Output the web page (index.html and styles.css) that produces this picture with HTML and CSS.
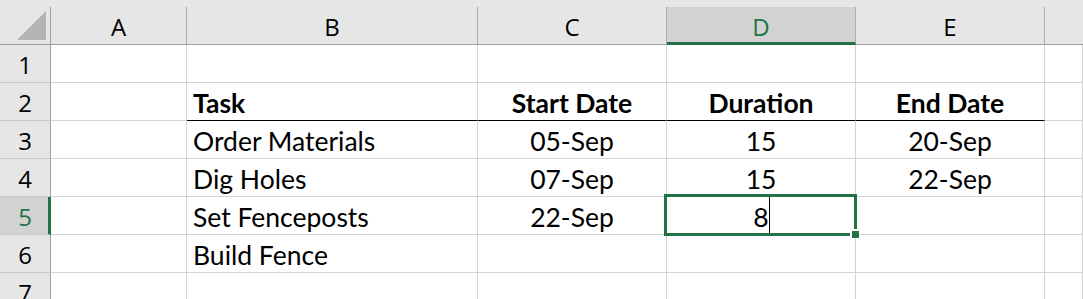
FILE: index.html
```html
<!DOCTYPE html>
<html lang="en">
<head>
    <meta charset="UTF-8">
    <title>Fence schedule</title>
    <link rel="stylesheet" href="styles.css">
</head>
<body>
    <div class="band"></div>
    <div class="sheet">
        <!-- column headers -->
        <div class="corner"><span class="tri"></span></div>
        <div class="col-head">A</div>
        <div class="col-head">B</div>
        <div class="col-head">C</div>
        <div class="col-head sel">D</div>
        <div class="col-head">E</div>
        <div class="col-head last"></div>

        <!-- row 1 -->
        <div class="row-head">1</div>
        <div class="cell"></div><div class="cell"></div><div class="cell"></div>
        <div class="cell"></div><div class="cell"></div><div class="cell"></div>

        <!-- row 2 -->
        <div class="row-head">2</div>
        <div class="cell"></div>
        <div class="cell bold under">Task</div>
        <div class="cell bold under center">Start Date</div>
        <div class="cell bold under center">Duration</div>
        <div class="cell bold under center">End Date</div>
        <div class="cell"></div>

        <!-- row 3 -->
        <div class="row-head">3</div>
        <div class="cell"></div>
        <div class="cell">Order Materials</div>
        <div class="cell center">05-Sep</div>
        <div class="cell center">15</div>
        <div class="cell center">20-Sep</div>
        <div class="cell"></div>

        <!-- row 4 -->
        <div class="row-head">4</div>
        <div class="cell"></div>
        <div class="cell">Dig Holes</div>
        <div class="cell center">07-Sep</div>
        <div class="cell center">15</div>
        <div class="cell center">22-Sep</div>
        <div class="cell"></div>

        <!-- row 5 -->
        <div class="row-head sel">5</div>
        <div class="cell"></div>
        <div class="cell">Set Fenceposts</div>
        <div class="cell center">22-Sep</div>
        <div class="cell center active">8<span class="caret"></span><span class="handle"></span></div>
        <div class="cell"></div>
        <div class="cell"></div>

        <!-- row 6 -->
        <div class="row-head">6</div>
        <div class="cell"></div>
        <div class="cell">Build Fence</div>
        <div class="cell"></div><div class="cell"></div><div class="cell"></div><div class="cell"></div>

        <!-- row 7 -->
        <div class="row-head">7</div>
        <div class="cell"></div><div class="cell"></div><div class="cell"></div>
        <div class="cell"></div><div class="cell"></div><div class="cell"></div>
    </div>
</body>
</html>
```

FILE: styles.css
```css
* {
    box-sizing: border-box;
}

body {
    margin: 0;
    background-color: #fff;
    overflow: hidden;
}

.band {
    height: 7px;
    background-color: #e6e6e6;
}

.sheet {
    display: grid;
    grid-template-columns: 51px 136px 291px 189px 189px 189px 1fr;
    grid-auto-rows: 38px;
    font-family: "Lato", "Liberation Sans", sans-serif;
    font-size: 26.5px;
    color: #000;
}

.corner,
.col-head {
    background-color: #e6e6e6;
    border-right: 1px solid #ababab;
    border-bottom: 1px solid #9e9e9e;
}

.corner {
    position: relative;
    border-right-color: #9e9e9e;
}

.corner .tri {
    position: absolute;
    right: 4px;
    bottom: 4px;
    width: 0;
    height: 0;
    border-left: 29px solid transparent;
    border-bottom: 29px solid #b4b4b4;
}

.col-head {
    display: flex;
    justify-content: center;
    align-items: center;
    padding-top: 2px;
    font-family: "Open Sans", sans-serif;
    font-size: 24px;
    line-height: 1;
    color: #000;
}

.col-head.last {
    border-right: none;
}

.col-head.sel {
    background-color: #d2d2d2;
    color: #217346;
    border-bottom: 3px solid #217346;
    padding-top: 4px;
}

.row-head {
    display: flex;
    justify-content: center;
    align-items: center;
    padding-top: 3px;
    background-color: #e6e6e6;
    border-right: 1px solid #9e9e9e;
    border-bottom: 1px solid #c8c8c8;
    font-family: "Open Sans", sans-serif;
    font-size: 24px;
    line-height: 1;
}

.row-head.sel {
    background-color: #d2d2d2;
    color: #217346;
    border-right: 3px solid #217346;
    padding-left: 2px;
}

.cell {
    display: flex;
    align-items: flex-end;
    padding: 0 6px 4px;
    line-height: 1;
    white-space: nowrap;
    border-right: 1px solid #d4d4d4;
    border-bottom: 1px solid #d4d4d4;
}

.cell.center {
    justify-content: center;
}

.cell.bold {
    font-weight: bold;
}

.cell.under {
    border-bottom-color: #000;
}

.cell.active {
    position: relative;
}

.cell.active::after {
    content: "";
    position: absolute;
    top: -3px;
    left: -3px;
    right: -2px;
    bottom: -2px;
    border: 3px solid #217346;
}

.caret {
    position: absolute;
    top: 0;
    bottom: 1px;
    left: 102px;
    width: 1px;
    background-color: #000;
}

.handle {
    position: absolute;
    right: -4px;
    bottom: -4px;
    width: 9px;
    height: 9px;
    background-color: #217346;
    border-top: 2px solid #fff;
    border-left: 2px solid #fff;
    z-index: 1;
}
```
